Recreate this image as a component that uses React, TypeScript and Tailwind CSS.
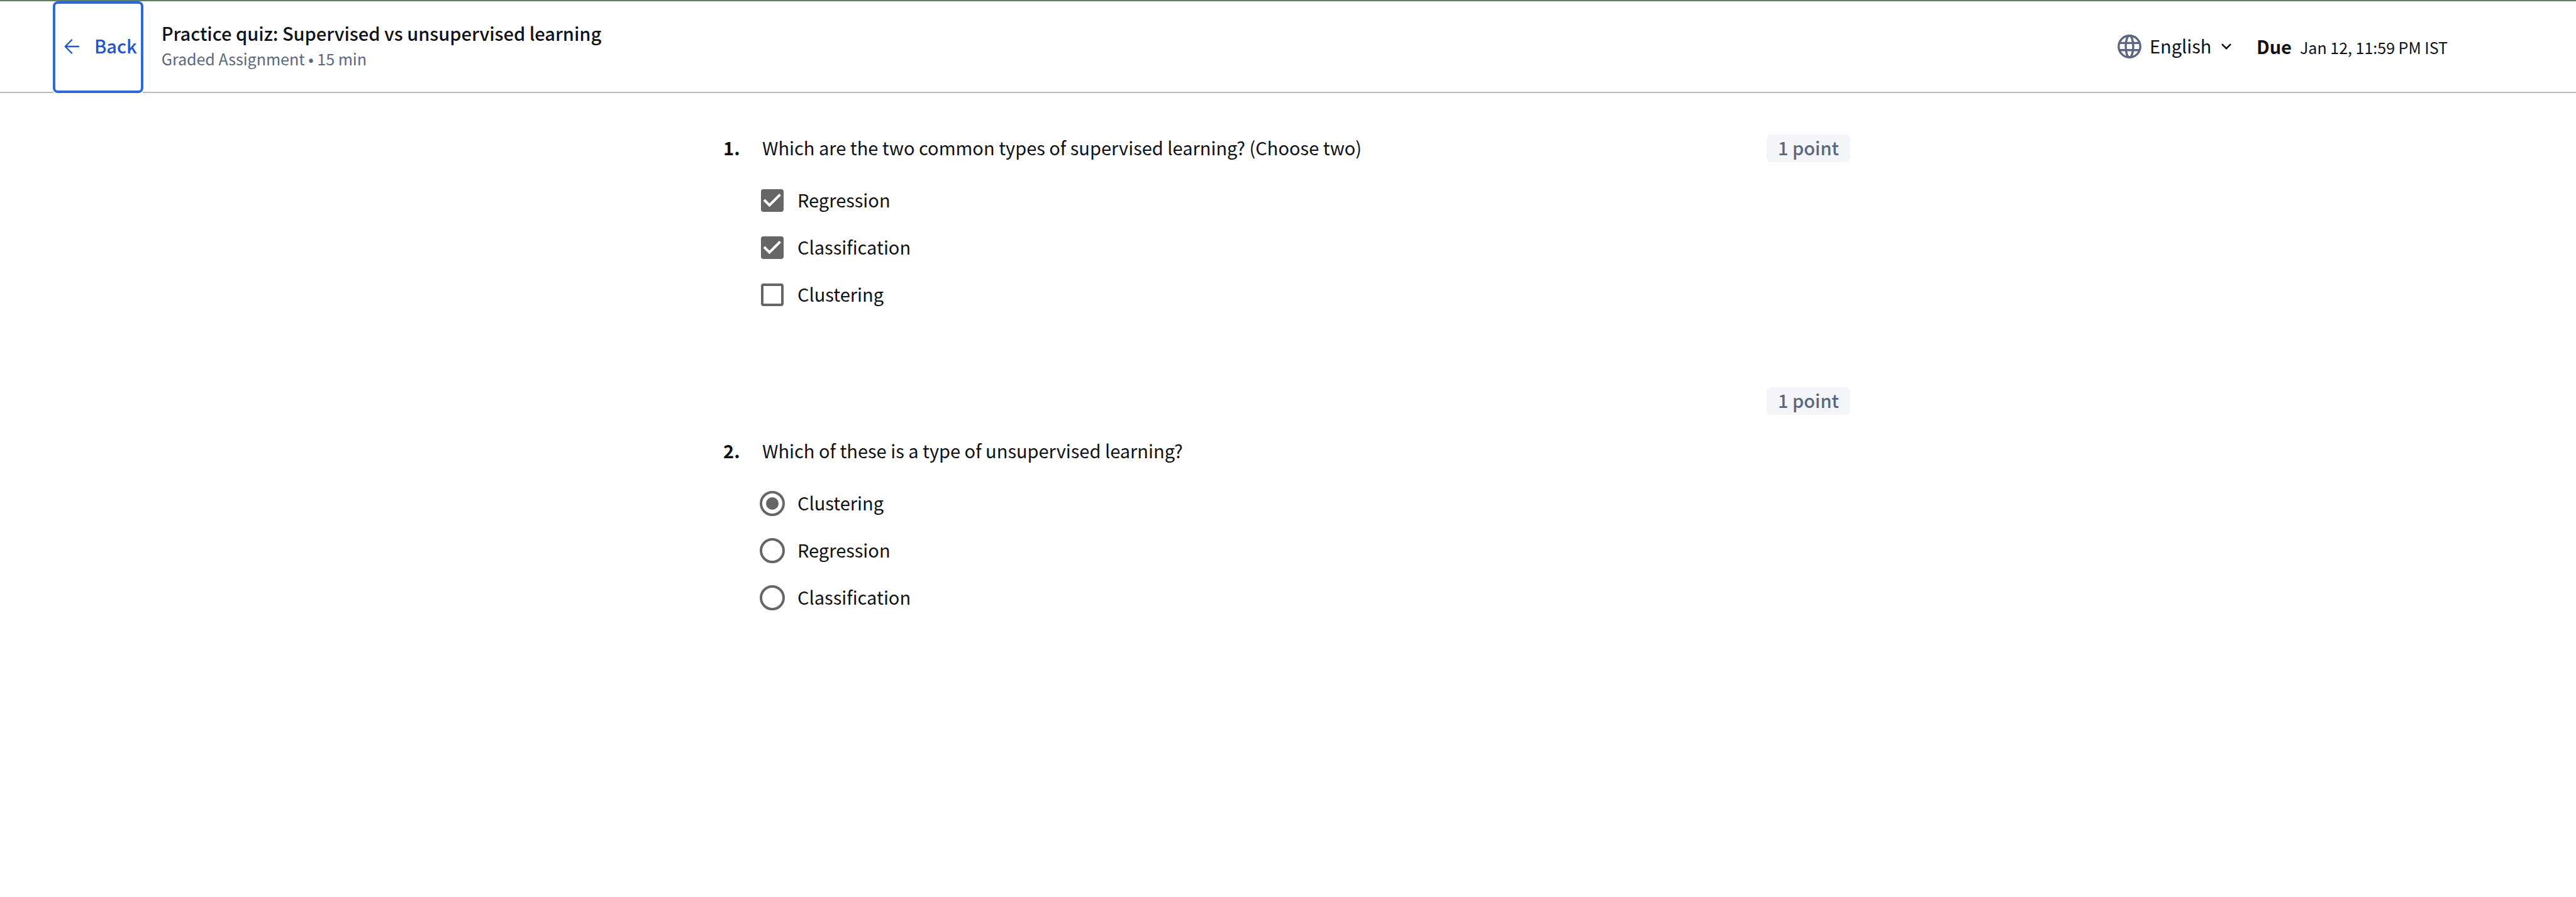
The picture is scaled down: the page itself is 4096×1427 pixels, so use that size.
import { useId, useState } from "react";
import type { ReactNode } from "react";

type Kind = "checkbox" | "radio";

function ArrowLeft() {
  return (
    <svg width="24" height="24" viewBox="0 0 24 24" fill="none" stroke="currentColor" strokeWidth="2.4" strokeLinecap="round" strokeLinejoin="round" aria-hidden="true">
      <path d="M12 1.5 1.8 12 12 22.5M1.8 12H23" />
    </svg>
  );
}

function Globe() {
  return (
    <svg width="38" height="38" viewBox="0 0 38 38" fill="none" stroke="currentColor" strokeWidth="3.4" className="text-[#5b6780]" aria-hidden="true">
      <circle cx="19" cy="19" r="17.2" />
      <ellipse cx="19" cy="19" rx="6" ry="17.2" />
      <path d="M3.5 13.4h31M3.5 24.8h31" />
    </svg>
  );
}

function Chevron({ className }: { className?: string }) {
  return (
    <svg width="16" height="10" viewBox="0 0 16 10" fill="none" stroke="currentColor" strokeWidth="2.6" className={className} aria-hidden="true">
      <path d="M1 1.2 8 8.2 15 1.2" />
    </svg>
  );
}

function Option({ kind, name, label, initial }: { kind: Kind; name: string; label: string; initial: boolean }) {
  const id = useId();
  return (
    <div className="flex items-center gap-5">
      <span className="grid size-10 place-items-center">
        {kind === "checkbox" ? (
          <>
            <input id={id} type="checkbox" name={name} defaultChecked={initial} className="peer col-start-1 row-start-1 size-9 appearance-none rounded-[4px] border-4 border-[#666] bg-white checked:bg-[#666]" />
            <svg viewBox="0 0 36 36" fill="none" stroke="white" strokeWidth="4" className="pointer-events-none invisible col-start-1 row-start-1 size-9 peer-checked:visible" aria-hidden="true">
              <path d="M5 17 13.5 25.5 30.5 8.5" />
            </svg>
          </>
        ) : (
          <>
            <input id={id} type="radio" name={name} defaultChecked={initial} className="peer col-start-1 row-start-1 size-10 appearance-none rounded-full border-4 border-[#666] bg-white" />
            <span className="pointer-events-none invisible col-start-1 row-start-1 size-5 rounded-full bg-[#666] peer-checked:visible" />
          </>
        )}
      </span>
      <label htmlFor={id} className="pb-1">{label}</label>
    </div>
  );
}

function Points() {
  return (
    <span className="shrink-0 rounded-lg bg-[#f3f5f9] px-[18px] pb-1 font-medium text-[#5b6780]">1 point</span>
  );
}

function Prompt({ number, children }: { number: number; children: ReactNode }) {
  return (
    <h2 className="flex pb-1">
      <span className="w-[62px] shrink-0 font-bold">{number}.</span>
      <span>{children}</span>
    </h2>
  );
}

function Options({ kind, name, items, chosen }: { kind: Kind; name: string; items: string[]; chosen: string[] }) {
  return (
    <div role={kind === "radio" ? "radiogroup" : "group"} className="mt-[39px] flex flex-col gap-[31px] pl-[58px]">
      {items.map((item) => (
        <Option key={item} kind={kind} name={name} label={item} initial={chosen.includes(item)} />
      ))}
    </div>
  );
}

export default function App() {
  const [language, setLanguage] = useState("English");
  return (
    <div className="min-h-screen bg-white font-['Noto_Sans_CJK_JP','Noto_Sans',sans-serif] text-[29px] leading-10 text-[#0f1114]">
      <div className="relative z-10 h-0.5 bg-[#5f7f5f]" />
      <header className="flex h-[146px] items-center border-b-2 border-[#bababa] pr-[204px] pl-[84px]">
        <button type="button" className="-mb-0.5 flex items-center gap-6 self-stretch rounded-lg border-4 border-[#2d68d8] bg-white pr-1.5 pb-0.5 pl-3.5 font-medium text-[#2154ce] ring-2 ring-white">
          <ArrowLeft />
          <span className="pb-1">Back</span>
        </button>
        <div className="ml-[29px] flex-1 pb-1.5">
          <h1 className="leading-11 font-medium">Practice quiz: Supervised vs unsupervised learning</h1>
          <p className="text-[25px] leading-[38px] text-[#5b6780]">Graded Assignment • 15 min</p>
        </div>
        <div className="flex items-center">
          <Globe />
          <div className="ml-[13px] grid items-center">
            <select aria-label="Language" value={language} onChange={(e) => setLanguage(e.target.value)} className="col-start-1 row-start-1 appearance-none bg-transparent pr-[31px] pb-1">
              <option>English</option>
            </select>
            <Chevron className="pointer-events-none col-start-1 row-start-1 justify-self-end" />
          </div>
          <p className="ml-10 flex items-baseline gap-[13px]">
            <span className="font-bold">Due</span>
            <span className="text-[25px]">Jan 12, 11:59 PM IST</span>
          </p>
        </div>
      </header>
      <main className="pt-[66px] pr-1">
        <div className="mx-auto max-w-[1792px]">
          <section>
            <div className="flex items-start justify-between">
              <Prompt number={1}>Which are the two common types of supervised learning? (Choose two)</Prompt>
              <Points />
            </div>
            <Options kind="checkbox" name="q1" items={["Regression", "Classification", "Clustering"]} chosen={["Regression", "Classification"]} />
          </section>
          <section className="mt-[125px]">
            <div className="mb-9 flex justify-end">
              <Points />
            </div>
            <Prompt number={2}>Which of these is a type of unsupervised learning?</Prompt>
            <Options kind="radio" name="q2" items={["Clustering", "Regression", "Classification"]} chosen={["Clustering"]} />
          </section>
        </div>
      </main>
    </div>
  );
}
